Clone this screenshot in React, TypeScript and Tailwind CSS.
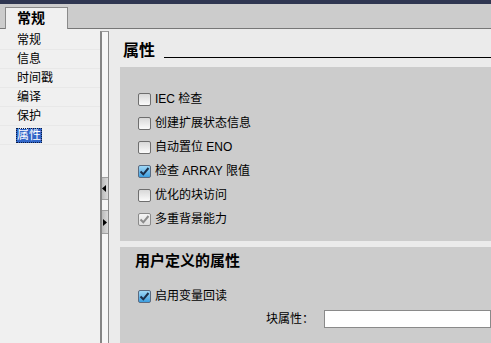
import React from 'react';

const FONT = { fontFamily: '"Liberation Sans", "Noto Sans CJK SC", sans-serif' };

type BoxState = 'off' | 'on' | 'dim';

const CheckBox: React.FC<{ state: BoxState }> = ({ state }) => {
  if (state === 'on') {
    return (
      <div className="w-[13px] h-[13px] rounded-[2px] border border-[#5a6a80] bg-gradient-to-b from-[#9ed7f5] to-[#3a9ee0] flex items-center justify-center">
        <svg width="11" height="11" viewBox="0 0 11 11">
          <path d="M1.5 5.5 L4.3 8.3 L9.5 2" fill="none" stroke="#1c2f4a" strokeWidth="2" />
        </svg>
      </div>
    );
  }
  if (state === 'dim') {
    return (
      <div className="w-[13px] h-[13px] rounded-[2px] border border-[#8a8a8a] bg-gradient-to-b from-[#f4f4f4] to-[#dedede] flex items-center justify-center">
        <svg width="11" height="11" viewBox="0 0 11 11">
          <path d="M1.5 5.5 L4.3 8.3 L9.5 2" fill="none" stroke="#8c8c8c" strokeWidth="2" />
        </svg>
      </div>
    );
  }
  return (
    <div className="w-[13px] h-[13px] rounded-[2px] border border-[#6e6e6e] bg-gradient-to-b from-[#d8d8d8] to-[#fbfbfb]" />
  );
};

const options: { label: string; state: BoxState }[] = [
  { label: 'IEC 检查', state: 'off' },
  { label: '创建扩展状态信息', state: 'off' },
  { label: '自动置位 ENO', state: 'off' },
  { label: '检查 ARRAY 限值', state: 'on' },
  { label: '优化的块访问', state: 'off' },
  { label: '多重背景能力', state: 'dim' },
];

const navItems = ['常规', '信息', '时间戳', '编译', '保护', '属性'];

const App: React.FC = () => {
  return (
    <div className="w-[491px] h-[343px] overflow-hidden flex flex-col bg-[#ebebeb] text-black text-[12px]" style={FONT}>
      {/* top strip */}
      <div className="h-[4px] bg-[#2f3651]" />
      {/* tab strip */}
      <div className="h-[25px] bg-[#cccccc] border-b border-[#777777] flex items-end pl-[5px]">
        <div className="h-[22px] w-[63px] -mb-px bg-[#f0f0f0] border border-b-0 border-[#8a8a8a] flex items-center pl-[11px] text-[14px] font-bold">
          常规
        </div>
      </div>
      <div className="flex-1 flex min-h-0">
        {/* nav list */}
        <div className="w-[100px] bg-[#f0f0f0] pt-[2px]">
          {navItems.map((item, i) => (
            <div key={item} className="h-[19px] border-b border-[#e8e8e8] flex items-center pl-[16px]">
              {i === navItems.length - 1 ? (
                <span className="px-px leading-[15px] bg-[#3166c8] text-white outline-1 outline-dotted outline-[#0a1a40] -outline-offset-1">{item}</span>
              ) : (
                <span className="px-px">{item}</span>
              )}
            </div>
          ))}
        </div>
        {/* splitter */}
        <div className="w-[8px] pt-[2px] flex">
          <div className="flex-1 border-l-2 border-r border-l-[#858585] border-r-[#8c8c8c] border-t border-t-[#9a9a9a] bg-[#f6f6f6] flex flex-col pt-[145px]">
            <div className="h-[23px] border-y border-[#a0a0a0] bg-gradient-to-r from-[#bcbcbc] to-[#dadada] flex items-center">
              <svg width="5" height="7" viewBox="0 0 5 7"><path d="M4 0 L0 3.5 L4 7 Z" fill="#000" /></svg>
            </div>
            <div className="h-[10px]" />
            <div className="h-[24px] border-y border-[#a0a0a0] bg-gradient-to-r from-[#bcbcbc] to-[#dadada] flex items-center pl-px">
              <svg width="5" height="7" viewBox="0 0 5 7"><path d="M0 0 L4 3.5 L0 7 Z" fill="#000" /></svg>
            </div>
          </div>
        </div>
        {/* content */}
        <div className="flex-1 pl-[12px] min-w-0">
          <div className="h-[38px] flex items-start pl-[3px] pt-[12px]">
            <span className="text-[16px] font-bold leading-[20px]">属性</span>
            <div className="flex-1 border-t border-black ml-[9px] mt-[16px]" />
          </div>
          <div className="h-[174px] bg-[#cccccc] pt-[20px] pl-[18px]">
            {options.map((o) => (
              <div key={o.label} className="h-[24px] flex items-center gap-[4px]">
                <CheckBox state={o.state} />
                <span>{o.label}</span>
              </div>
            ))}
          </div>
          <div className="h-[6px]" />
          <div className="h-[100px] bg-[#cccccc] pt-[5px]">
            <div className="pl-[15px] text-[15px] font-bold leading-[18px]">用户定义的属性</div>
            <div className="h-[24px] mt-[14px] pl-[18px] flex items-center gap-[4px]">
              <CheckBox state="on" />
              <span>启用变量回读</span>
            </div>
            <div className="flex items-center mt-[2px] pl-[146px]">
              <span>块属性：</span>
              <div className="flex-1 h-[18px] ml-[10px] bg-white border border-[#8a8a8a]" />
            </div>
          </div>
        </div>
      </div>
    </div>
  );
};

export default App;
